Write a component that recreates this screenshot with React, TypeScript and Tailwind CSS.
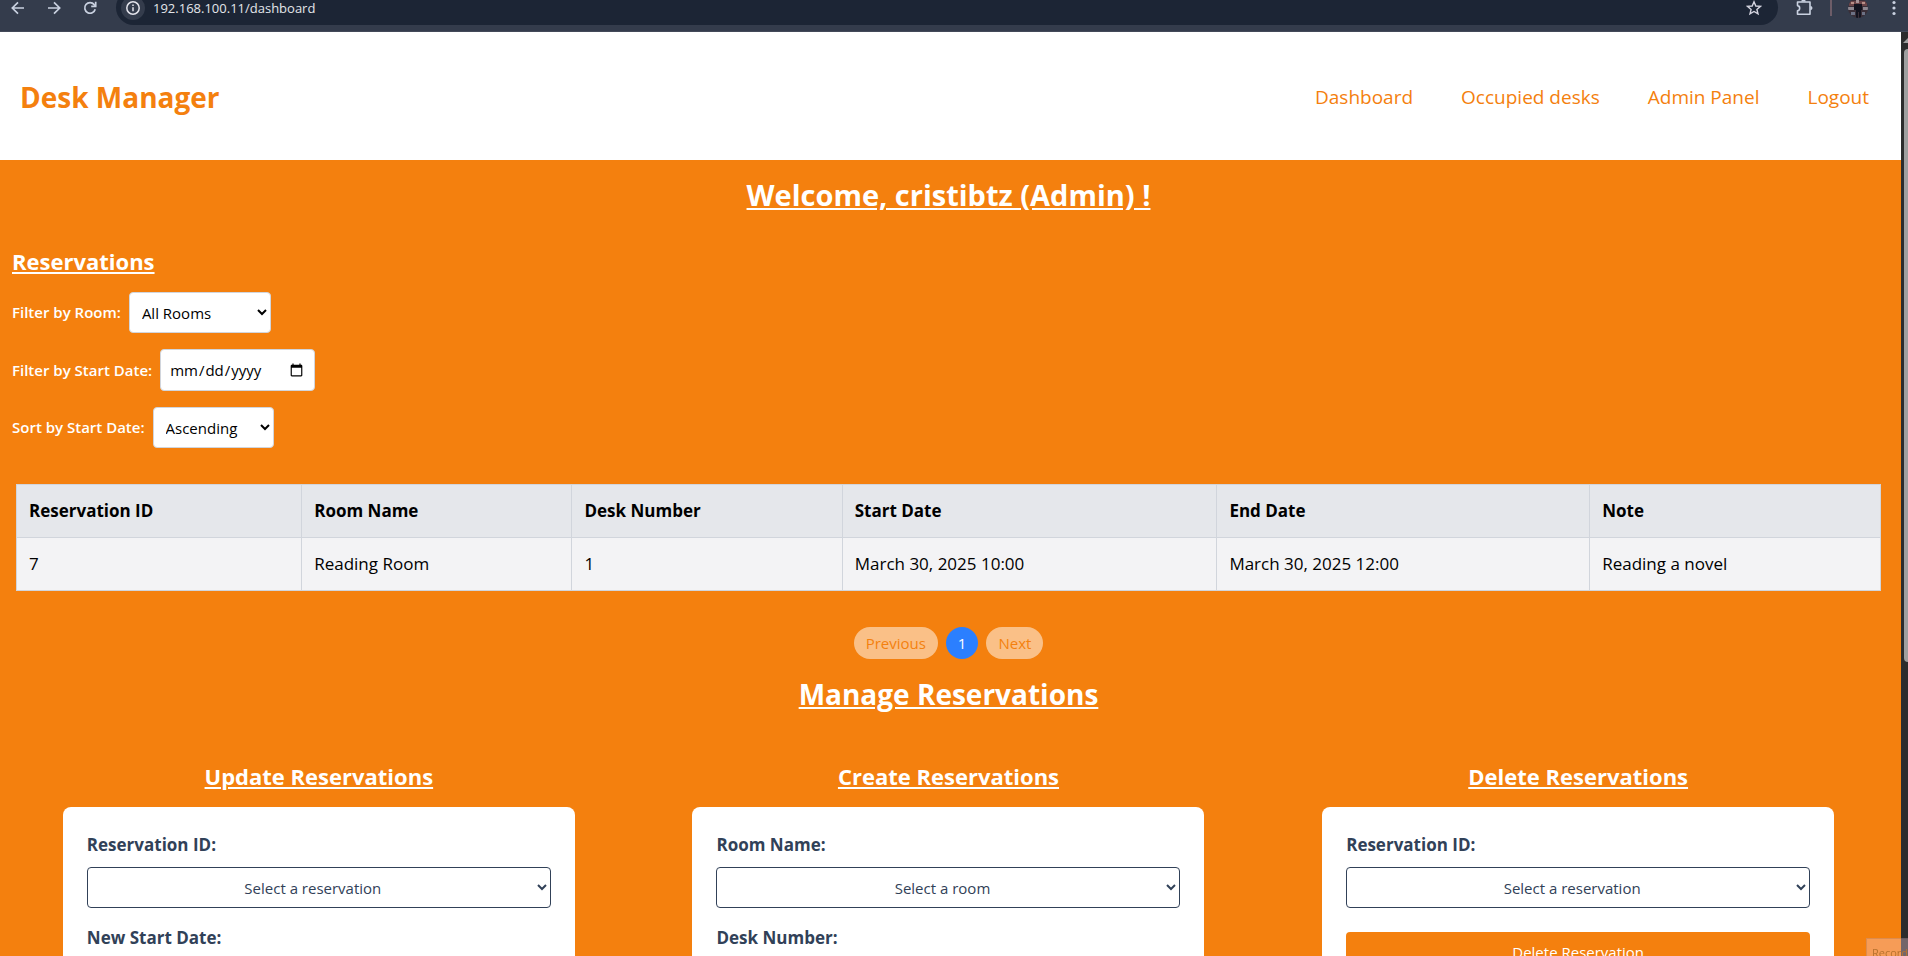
import { useId } from "react";
import type { ReactNode } from "react";

const NAV = ["Dashboard", "Occupied desks", "Admin Panel", "Logout"];

const COLUMNS = [
  { title: "Reservation ID", width: "w-[15.3%]" },
  { title: "Room Name", width: "w-[14.5%]" },
  { title: "Desk Number", width: "w-[14.5%]" },
  { title: "Start Date", width: "w-[20.1%]" },
  { title: "End Date", width: "w-[20%]" },
  { title: "Note", width: "w-[15.6%]" },
];

const ROWS = [
  ["7", "Reading Room", "1", "March 30, 2025 10:00", "March 30, 2025 12:00", "Reading a novel"],
];

function BrowserBar() {
  return (
    <div className="flex h-8 shrink-0 items-start border-b border-[#434a59] bg-[#343c4c] text-[#c9d1e0]">
      <div className="flex h-4 shrink-0 items-center gap-5 pl-2.5">
        <button type="button" aria-label="Back">
          <svg className="h-4 w-4" viewBox="0 0 16 16" fill="none" stroke="currentColor" strokeWidth="1.7">
            <path d="M14 8H2.5M8 2.3 2.3 8 8 13.7" />
          </svg>
        </button>
        <button type="button" aria-label="Forward">
          <svg className="h-4 w-4" viewBox="0 0 16 16" fill="none" stroke="currentColor" strokeWidth="1.7">
            <path d="M2 8h11.5M8 2.3 13.7 8 8 13.7" />
          </svg>
        </button>
        <button type="button" aria-label="Reload">
          <svg className="h-4 w-4" viewBox="0 0 16 16" fill="none" stroke="currentColor" strokeWidth="1.7">
            <path d="M13.2 9.2A5.3 5.3 0 1 1 12.2 4.6L13.6 6.2" />
            <path d="M13.7 1.8v4.6H9.2" />
          </svg>
        </button>
      </div>
      <div className="-mt-2.5 ml-[18px] flex h-[35px] grow items-center rounded-full bg-[#1c2535] pr-4 pl-[5px]">
        <span className="flex h-6 w-6 items-center justify-center rounded-full bg-[#343c4c]">
          <svg className="h-4 w-4" viewBox="0 0 16 16" fill="none" stroke="#e4e4ec" strokeWidth="1.5">
            <circle cx="8" cy="8" r="6.2" />
            <path d="M8 7.2v4M8 4.5v1.5" />
          </svg>
        </span>
        <input
          aria-label="Address"
          defaultValue="192.168.100.11/dashboard"
          className="ml-2 grow bg-transparent text-[13px] leading-5 text-[#e3e5ea] outline-none"
        />
        <button type="button" aria-label="Bookmark">
          <svg className="h-4 w-4" viewBox="0 0 16 16" fill="none" stroke="#d5d5e0" strokeWidth="1.4">
            <path d="m8 1.8 1.8 4.2 4.6.4-3.5 3 1.1 4.5L8 11.5l-4 2.4 1.1-4.5-3.5-3 4.6-.4z" />
          </svg>
        </button>
      </div>
      <div className="flex h-4 shrink-0 items-center pr-1.5 pl-4">
        <button type="button" aria-label="Extensions">
          <svg className="h-5 w-5" viewBox="0 0 20 20" fill="none" stroke="currentColor" strokeWidth="1.6">
            <path
              d="M3.5 4H16v12.3H3.5v-3.6c2.9-.6 2.9-4.5 0-5.1z"
              strokeLinejoin="round"
            />
            <path d="M7.3 3.6a2.2 2.2 0 0 1 4.4 0zM16.4 8a2.1 2.1 0 0 1 0 4.2z" fill="currentColor" stroke="none" />
          </svg>
        </button>
        <span className="ml-4 h-4 w-0.5 bg-[#6d5d68]" />
        <button type="button" aria-label="Profile" className="ml-4">
          <svg className="h-5 w-5 rounded-full" viewBox="0 0 20 20">
            <rect width="20" height="20" fill="#3a2f38" />
            <path d="M1 3h18v5H1z" fill="#6a4448" />
            <path d="M3 4h3v2H3zM14 4h3v2h-3z" fill="#b88f88" />
            <path d="M0 9h6v3H0zM15 9h5v3h-5z" fill="#8d8790" />
            <path d="M6 6h8v6h-1v8h-2v-6h-1v6H8v-8H6z" fill="#12131f" />
            <path d="M8 2h3v3H8z" fill="#a89498" />
            <path d="M3 14h4v3H3zM14 14h3v3h-3z" fill="#6d7285" />
          </svg>
        </button>
        <button type="button" aria-label="Menu" className="ml-[18px]">
          <svg className="h-4 w-4" viewBox="0 0 16 16" fill="currentColor">
            <circle cx="8" cy="2.5" r="1.6" />
            <circle cx="8" cy="8" r="1.6" />
            <circle cx="8" cy="13.5" r="1.6" />
          </svg>
        </button>
      </div>
    </div>
  );
}

function FilterRow({ label, children }: { label: string; children: (id: string) => ReactNode }) {
  const id = useId();
  return (
    <div className="flex items-center gap-2">
      <label htmlFor={id} className="text-[15px] font-semibold text-white">
        {label}
      </label>
      {children(id)}
    </div>
  );
}

function SelectField({ label, placeholder }: { label: string; placeholder: string }) {
  const id = useId();
  return (
    <div className="flex flex-col gap-2">
      <label htmlFor={id} className="text-[17px] leading-7 font-bold">
        {label}
      </label>
      <select
        id={id}
        className="h-[41px] w-full rounded border border-[#314158] bg-white px-2 text-center text-[15px] text-[#314158]"
      >
        <option>{placeholder}</option>
      </select>
    </div>
  );
}

function DateField({ label }: { label: string }) {
  const id = useId();
  return (
    <div className="flex flex-col gap-2">
      <label htmlFor={id} className="text-[17px] leading-7 font-bold">
        {label}
      </label>
      <input id={id} type="datetime-local" className="h-[41px] w-full rounded border border-[#314158] px-2" />
    </div>
  );
}

function SubmitButton({ children }: { children: ReactNode }) {
  return (
    <button type="button" className="h-10 w-full rounded bg-[#f4800e] text-[15px] text-white">
      {children}
    </button>
  );
}

function ManageCard({ title, children }: { title: string; children: ReactNode }) {
  return (
    <section className="flex flex-col items-center gap-[15px]">
      <h3 className="text-[22px] leading-8 font-bold text-white underline">{title}</h3>
      <form className="flex w-full max-w-lg flex-col gap-4 rounded-lg bg-white p-6 text-[#314158]">{children}</form>
    </section>
  );
}

export default function App() {
  return (
    <div className="flex h-screen flex-col overflow-hidden bg-[#f4800e] font-['Open_Sans','Noto_Sans',sans-serif]">
      <BrowserBar />
      <div className="flex min-h-0 grow">
        <div className="min-w-0 grow overflow-y-auto [scrollbar-width:none]">
          <header className="flex h-32 items-center justify-between bg-white pt-0.5 pr-8 pl-5 text-[#f4800e]">
            <h1 className="text-[28px] font-bold">Desk Manager</h1>
            <nav className="flex gap-12 text-[19px]">
              {NAV.map((item) => (
                <a key={item} href="#">
                  {item}
                </a>
              ))}
            </nav>
          </header>

          <main className="pr-1 pb-8">
            <h2 className="pt-[15px] text-center text-[29px] leading-10 font-bold text-white underline">
              Welcome, cristibtz (Admin) !
            </h2>

            <section className="px-3 pt-[30px]">
              <h3 className="text-[22px] leading-8 font-bold text-white underline">Reservations</h3>
              <div className="flex flex-col gap-4 pt-[15px]">
                <FilterRow label="Filter by Room:">
                  {(id) => (
                    <select
                      id={id}
                      className="h-[41px] w-[142px] rounded border border-gray-300 bg-white px-2 text-[15px] text-black"
                    >
                      <option>All Rooms</option>
                      <option>Reading Room</option>
                    </select>
                  )}
                </FilterRow>
                <FilterRow label="Filter by Start Date:">
                  {(id) => (
                    <input
                      id={id}
                      type="date"
                      className="h-[42px] w-[155px] rounded border border-gray-300 bg-white px-2 text-[15px] text-black"
                    />
                  )}
                </FilterRow>
                <FilterRow label="Sort by Start Date:">
                  {(id) => (
                    <select
                      id={id}
                      className="h-[41px] w-[121px] rounded border border-gray-300 bg-white px-2 text-[15px] text-black"
                    >
                      <option>Ascending</option>
                      <option>Descending</option>
                    </select>
                  )}
                </FilterRow>
              </div>
            </section>

            <div className="px-4 pt-9">
              <table className="w-full table-fixed border-collapse text-left text-[17px] leading-7 text-black">
                <thead className="bg-gray-200">
                  <tr>
                    {COLUMNS.map((column) => (
                      <th
                        key={column.title}
                        className={`${column.width} border border-gray-300 px-3 py-3 font-bold`}
                      >
                        {column.title}
                      </th>
                    ))}
                  </tr>
                </thead>
                <tbody className="bg-[#f3f3f5]">
                  {ROWS.map((row) => (
                    <tr key={row[0]}>
                      {row.map((cell, index) => (
                        <td key={index} className="border border-gray-300 px-3 py-3">
                          {cell}
                        </td>
                      ))}
                    </tr>
                  ))}
                </tbody>
              </table>
            </div>

            <div className="flex justify-center gap-2 pt-9 text-[15px] leading-6">
              <button type="button" className="rounded-full bg-white/50 px-3 py-1 text-[#f4800e]">
                Previous
              </button>
              <button type="button" className="rounded-full bg-[#2b7fff] px-3 py-1 text-white">
                1
              </button>
              <button type="button" className="rounded-full bg-white/50 px-3 py-1 text-[#f4800e]">
                Next
              </button>
            </div>

            <h2 className="pt-[15px] text-center text-[28px] leading-10 font-bold text-white underline">
              Manage Reservations
            </h2>

            <div className="grid grid-cols-3 gap-2 px-2 pt-[46px]">
              <ManageCard title="Update Reservations">
                <SelectField label="Reservation ID:" placeholder="Select a reservation" />
                <DateField label="New Start Date:" />
                <DateField label="New End Date:" />
                <SubmitButton>Update Reservation</SubmitButton>
              </ManageCard>
              <ManageCard title="Create Reservations">
                <SelectField label="Room Name:" placeholder="Select a room" />
                <SelectField label="Desk Number:" placeholder="Select a desk" />
                <DateField label="Start Date:" />
                <SubmitButton>Create Reservation</SubmitButton>
              </ManageCard>
              <ManageCard title="Delete Reservations">
                <SelectField label="Reservation ID:" placeholder="Select a reservation" />
                <div className="pt-2">
                  <SubmitButton>Delete Reservation</SubmitButton>
                </div>
              </ManageCard>
            </div>
          </main>
        </div>

        <div className="w-[7px] shrink-0 overflow-hidden bg-[#2c2c2c]">
          <svg className="mt-1.5 ml-0.5 h-[5px] w-[5px]" viewBox="0 0 5 5" fill="#9f9f9f">
            <path d="M0 5 5 0v5z" />
          </svg>
          <div className="mt-1.5 ml-[3px] h-[613px] rounded-l bg-[#9f9f9f]" />
        </div>
      </div>

      <div className="fixed right-0 bottom-0 h-[18px] w-[42px] overflow-hidden border-t border-l border-black/10 bg-[#f8d0e0]/35 pt-1 pl-[5px] text-[11px] leading-5 text-[#b8722f]">
        Recording
      </div>
    </div>
  );
}
